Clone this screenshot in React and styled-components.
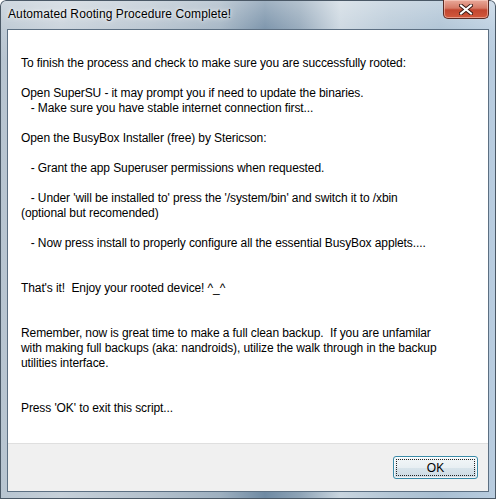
import React from "react";
import styled, { createGlobalStyle } from "styled-components";

const lines = [
  "To finish the process and check to make sure you are successfully rooted:",
  "",
  "Open SuperSU - it may prompt you if need to update the binaries.",
  "   - Make sure you have stable internet connection first...",
  "",
  "Open the BusyBox Installer (free) by Stericson:",
  "",
  "   - Grant the app Superuser permissions when requested.",
  "",
  "   - Under 'will be installed to' press the '/system/bin' and switch it to /xbin",
  "(optional but recomended)",
  "",
  "   - Now press install to properly configure all the essential BusyBox applets....",
  "",
  "",
  "That's it!  Enjoy your rooted device! ^_^",
  "",
  "",
  "Remember, now is great time to make a full clean backup.  If you are unfamilar",
  "with making full backups (aka: nandroids), utilize the walk through in the backup",
  "utilities interface.",
  "",
  "",
  "Press 'OK' to exit this script...",
];

const App = () => {
  return (
    <>
      <GlobalStyle />
      <Window>
        <TitleBar>
          <Title>Automated Rooting Procedure Complete!</Title>
          <CloseButton>
            <svg width="14" height="11" viewBox="0 0 14 11">
              <path
                d="M2 1.5 L12 9.5 M12 1.5 L2 9.5"
                stroke="#3a1a14"
                strokeWidth="4"
                strokeLinecap="square"
              />
              <path
                d="M2 1.5 L12 9.5 M12 1.5 L2 9.5"
                stroke="#ffffff"
                strokeWidth="2"
                strokeLinecap="square"
              />
            </svg>
          </CloseButton>
        </TitleBar>
        <Client>
          <Body>{lines.join("\n")}</Body>
          <Footer>
            <OkButton>
              <FocusRect>OK</FocusRect>
            </OkButton>
          </Footer>
        </Client>
      </Window>
    </>
  );
};

const GlobalStyle = createGlobalStyle`
  html, body {
    margin: 0;
    padding: 0;
    overflow: hidden;
  }
  body {
    font-family: "Liberation Sans", Arial, sans-serif;
  }
`;

const Window = styled.div`
  width: 496px;
  height: 499px;
  box-sizing: border-box;
  padding: 0 7px 7px 7px;
  display: flex;
  flex-direction: column;
  border-radius: 6px 6px 0 0;
  background:
    linear-gradient(
      180deg,
      rgba(255, 255, 255, 0.35) 0px,
      rgba(255, 255, 255, 0.1) 30px,
      rgba(255, 255, 255, 0) 60px
    ),
    linear-gradient(
      90deg,
      #b7c4d0 0px,
      #c6d0d9 60px,
      #b4c1cd 150px,
      #9eb0c0 220px,
      #6f8aa3 265px,
      #8ea3b6 300px,
      #c9d5df 340px,
      #b5c7d6 390px,
      #a9bfd2 440px,
      #b9cde0 496px
    );
  box-shadow: inset 0 0 0 1px #4a5866;
`;

const TitleBar = styled.div`
  height: 29px;
  display: flex;
  justify-content: space-between;
  align-items: flex-start;
  flex-shrink: 0;
`;

const Title = styled.div`
  padding: 7px 0 0 1px;
  font-size: 12px;
  letter-spacing: 0.1px;
  line-height: 15px;
  color: #000;
  text-shadow: 0 0 6px rgba(255, 255, 255, 0.9), 0 0 3px rgba(255, 255, 255, 0.8);
`;

const CloseButton = styled.div`
  width: 46px;
  height: 19px;
  box-sizing: border-box;
  display: flex;
  align-items: center;
  justify-content: center;
  border: 1px solid #5a2a24;
  border-top: none;
  border-radius: 0 0 5px 5px;
  background: linear-gradient(
    180deg,
    #e9a99a 0%,
    #d67a66 45%,
    #c24630 55%,
    #d2583c 100%
  );
  box-shadow: inset 0 0 0 1px rgba(255, 220, 210, 0.5);
`;

const Client = styled.div`
  flex: 1;
  display: flex;
  flex-direction: column;
  border: 1px solid #5c6f82;
  background: #f0f0f0;
`;

const Body = styled.div`
  flex: 1;
  background: #fff;
  padding: 26px 13px 0 13px;
  white-space: pre;
  font-size: 12px;
  letter-spacing: -0.1px;
  line-height: 15px;
  color: #000;
`;

const Footer = styled.div`
  height: 48px;
  flex-shrink: 0;
  display: flex;
  justify-content: flex-end;
  align-items: flex-start;
  padding: 12px 10px 0 0;
  box-sizing: border-box;
  background: #f0f0f0;
  border-top: 1px solid #dfdfdf;
`;

const OkButton = styled.div`
  width: 85px;
  height: 23px;
  box-sizing: border-box;
  padding: 2px;
  border: 1px solid #3a8aa8;
  border-radius: 3px;
  background: linear-gradient(
    180deg,
    #f3f7f9 0%,
    #e8eff3 50%,
    #d8e4eb 51%,
    #cddbe4 100%
  );
  box-shadow: inset 0 0 0 1px rgba(255, 255, 255, 0.7);
`;

const FocusRect = styled.div`
  height: 100%;
  box-sizing: border-box;
  border: 1px dotted #222;
  display: flex;
  align-items: center;
  justify-content: center;
  font-size: 12px;
  color: #000;
`;

export default App;
